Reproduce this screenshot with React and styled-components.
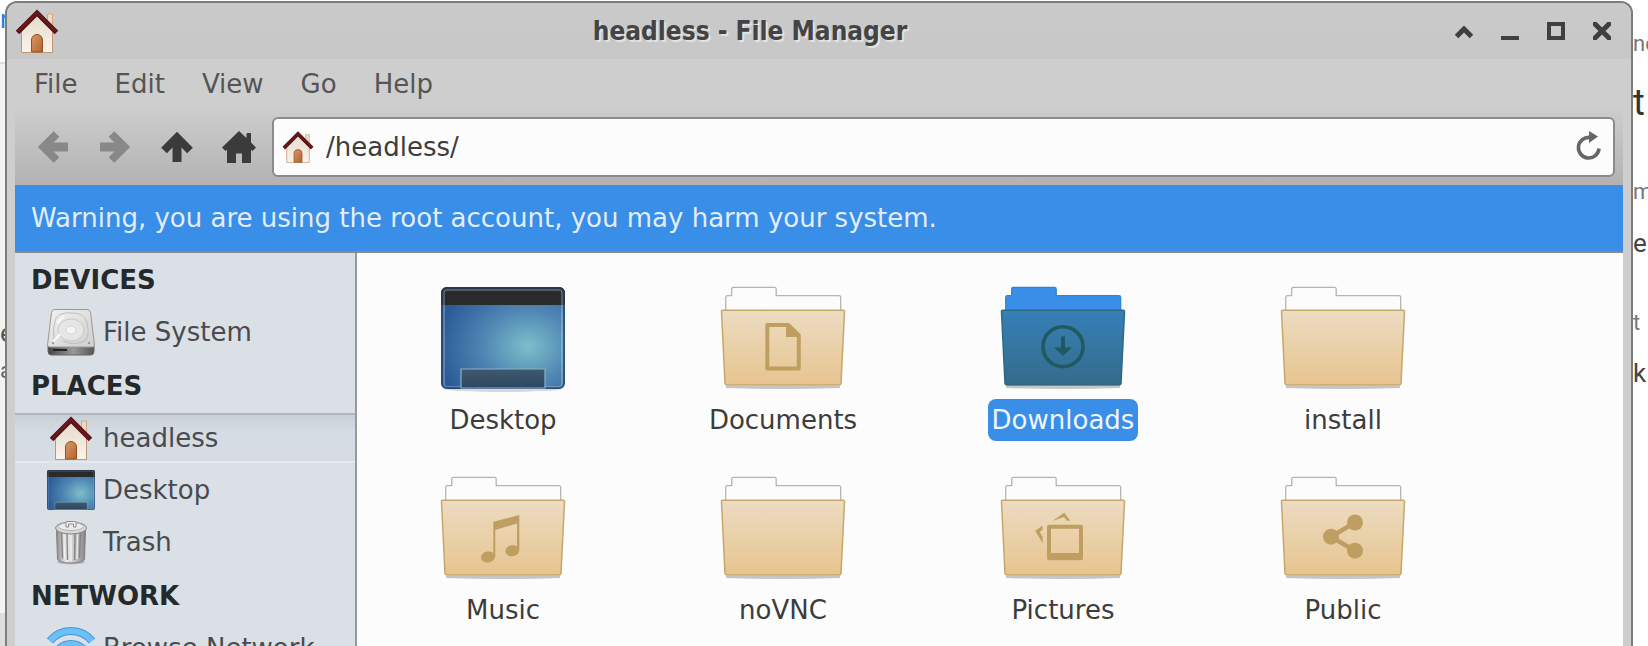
import React, { useState } from "react";
import styled, { createGlobalStyle, css } from "styled-components";

const GlobalStyle = createGlobalStyle`
  *, *::before, *::after { box-sizing: border-box; }
  body {
    margin: 0;
    background: #fefefe;
    color: #3c3c3c;
    font: 26px/32px "DejaVu Sans", Verdana, sans-serif;
  }
  button, input { font: inherit; color: inherit; }
  svg { display: block; flex: none; }
`;

/* ---------- layout ---------- */

const Screen = styled.div`
  display: grid;
  grid-template-columns: 5px minmax(0, 1fr) 15px;
  height: 100vh;
  overflow: hidden;
`;

const Gutter = styled.aside`
  display: flex;
  flex-direction: column;
  align-items: flex-start;
  overflow: hidden;
  font-family: Roboto, "Liberation Sans", sans-serif;
  background: ${(p) =>
    p.$side === "left"
      ? "linear-gradient(#fefefe 62px, #dcdcdc 62px, #dcdcdc 64px, #f3f3f3 64px, #f3f3f3 613px, #dddddd 613px)"
      : "#fefefe"};
`;

const Fragment = styled.span`
  margin-top: ${(p) => p.$gap}px;
  font-size: ${(p) => p.$size}px;
  line-height: 30px;
  color: ${(p) => p.$color || "#777"};
`;

const Window = styled.div`
  display: flex;
  flex-direction: column;
  min-width: 0;
  min-height: 0;
  margin-top: 1px;
  border: 2px solid #7c7e7b;
  border-bottom: 0;
  border-radius: 12px 12px 0 0;
  background: #cecece;
  overflow: hidden;
`;

const TitleBar = styled.header`
  display: flex;
  align-items: center;
  flex: none;
  height: 56px;
  padding: 0 6px 0 8px;
  background: linear-gradient(#cacaca, #c7c7c7);
`;

const Title = styled.h1`
  flex: 1;
  margin: 0;
  text-align: center;
  font: bold 26px/32px "DejaVu Sans Condensed", "Open Sans", sans-serif;
  color: #444;
  text-shadow: 2px 2px 0 #e2e2e2;
`;

const WindowButton = styled.button`
  display: grid;
  place-items: center;
  width: 46px;
  height: 56px;
  padding: 0;
  border: 0;
  background: none;
  color: #3f3f3f;
`;

const Body = styled.div`
  display: flex;
  flex-direction: column;
  flex: 1;
  min-height: 0;
  margin: 0 8px;
`;

const MenuBar = styled.nav`
  display: flex;
  gap: 1px;
  flex: none;
  height: 50px;
  padding: 0 1px;
`;

const MenuButton = styled.button`
  padding: 0 18px;
  border: 0;
  background: none;
  color: #555;
`;

const ToolBar = styled.div`
  display: flex;
  align-items: center;
  flex: none;
  height: 76px;
  padding: 0 8px 0 7px;
  background: linear-gradient(#cdcdcd, #b2b2b2);
`;

const ToolButton = styled.button`
  display: grid;
  place-items: center;
  width: 62px;
  height: 60px;
  padding: 0;
  border: 0;
  background: none;
  color: ${(p) => (p.disabled ? "#888" : "#3b3b3b")};
`;

const PathField = styled.label`
  display: flex;
  align-items: center;
  gap: 12px;
  flex: 1;
  min-width: 0;
  height: 60px;
  margin-left: 2px;
  padding: 0 10px 0 8px;
  border: 2px solid #8b8b8b;
  border-radius: 6px;
  background: #fcfcfc;
`;

const PathInput = styled.input`
  flex: 1;
  min-width: 0;
  padding: 0;
  border: 0;
  outline: 0;
  background: none;
`;

const ReloadButton = styled.button`
  padding: 0;
  border: 0;
  background: none;
  color: #666;
`;

const Warning = styled.p`
  flex: none;
  margin: 0;
  padding: 17px 16px;
  border-bottom: 2px solid #8a8a8a;
  background: #398ee7;
  color: #e2edf9;
`;

const Panes = styled.div`
  display: flex;
  flex: 1;
  min-height: 0;
`;

const Sidebar = styled.nav`
  flex: none;
  width: 342px;
  border-right: 2px solid #999;
  background: #dbdfe6;
  overflow: hidden;
`;

const GroupTitle = styled.h2`
  margin: 0;
  padding: 11px 16px;
  font-size: 26px;
  line-height: 32px;
  color: #24292b;
`;

const Place = styled.button`
  display: flex;
  align-items: center;
  gap: 8px;
  width: 100%;
  height: 50px;
  margin: 0 0 2px;
  padding: 0 32px;
  border: 0;
  background: none;
  color: #484b4e;
  white-space: nowrap;
  ${(p) =>
    p.$selected &&
    css`
      background: linear-gradient(#c8ced5, #d6dce3 40%, #d6dce3);
      box-shadow: inset 0 2px #b2b6bb, inset 0 -2px #e6e7e9;
    `}
`;

const PlaceIcon = styled.span`
  display: grid;
  place-items: center;
  width: 48px;
  height: 48px;
`;

const Files = styled.main`
  display: grid;
  flex: 1;
  min-width: 0;
  grid-template-columns: repeat(auto-fill, 280px);
  align-content: start;
  row-gap: 34px;
  padding: 32px 0 0 6px;
  background: #fcfcfc;
  overflow: hidden;
`;

const File = styled.button`
  display: flex;
  flex-direction: column;
  align-items: center;
  padding: 0;
  border: 0;
  background: none;
`;

const FileName = styled.span`
  padding: 5px 4px;
  border-radius: 8px;
  ${(p) => p.$selected && "background: #398ee7; color: #f0f6fd;"}
`;

/* ---------- drawings ---------- */

const House = ({ size = 44 }) => (
  <svg width={size} height={size} viewBox="0 0 44 44">
    <defs>
      <linearGradient id="wall" x2="0" y2="1">
        <stop offset="0" stopColor="#e3dacb" />
        <stop offset="1" stopColor="#fbf4ea" />
      </linearGradient>
      <linearGradient id="door" x2="1" y2="1">
        <stop offset="0" stopColor="#d99a6c" />
        <stop offset="1" stopColor="#b3622c" />
      </linearGradient>
    </defs>
    <path d="M32.5 5h5v12h-5z" fill="#eedac5" stroke="#cfa986" />
    <path d="M6.500 20 22 5l15.500 15v23.500h-31z" fill="url(#wall)" stroke="#c39472" />
    <path d="M16.500 43V31a5.500 5.500 0 0 1 11 0v12z" fill="url(#door)" stroke="#96501f" />
    <path d="M2.500 23.500 22 4l19.500 19.500" fill="none" stroke="#5a1216" strokeWidth="5" strokeLinejoin="miter" />
    <path d="M3 22.500 22 3.500l19 19" fill="none" stroke="#7a282a" strokeWidth="1" />
  </svg>
);

const DesktopArt = () => (
  <>
    <defs>
      <radialGradient id="sky" cx=".7" cy=".58" r=".72">
        <stop offset="0" stopColor="#7cbfca" />
        <stop offset=".5" stopColor="#4f86b3" />
        <stop offset="1" stopColor="#2c5c98" />
      </radialGradient>
      <linearGradient id="dock" x2="0" y2="1">
        <stop offset="0" stopColor="#41596f" />
        <stop offset="1" stopColor="#2c475f" />
      </linearGradient>
    </defs>
    <rect width="124" height="102" rx="6" fill="url(#sky)" />
    <path d="M0 18V6a6 6 0 0 1 6-6h112a6 6 0 0 1 6 6v12z" fill="#2a2a2a" />
    <rect x="3" y="3" width="118" height="97" rx="3" fill="none" stroke="#fff" strokeOpacity=".3" strokeWidth="1.500" />
    <rect x="1" y="1" width="122" height="100" rx="5" fill="none" stroke="#24406b" strokeOpacity=".7" strokeWidth="2" />
    <path d="M20 101V82h84v19z" fill="url(#dock)" stroke="#8fb0c6" strokeWidth="1.200" />
  </>
);

const DesktopSmall = () => (
  <svg width="48" height="40" viewBox="0 0 124 102" preserveAspectRatio="none"><DesktopArt /></svg>
);

const DesktopLarge = () => (
  <svg width="128" height="114" viewBox="-2 -2 128 114">
    <ellipse cx="62" cy="102" rx="58" ry="3" fill="#000" opacity=".14" />
    <DesktopArt />
  </svg>
);

const emblems = {
  document: (
    <>
      <path d="M48.300 40h21l10.500 10.500v33H48.300z" fill="none" stroke="currentColor" strokeWidth="4" strokeLinejoin="round" />
      <path d="M67 39v13h13z" fill="currentColor" />
    </>
  ),
  download: (
    <>
      <circle cx="64" cy="61.700" r="20" fill="none" stroke="currentColor" strokeWidth="3.600" />
      <path d="M62 51.500h4v11h7L64 71l-9-8.500h7z" fill="currentColor" />
    </>
  ),
  music: (
    <>
      <path d="M54.300 46.700 80.300 40v35.500H78V48.500L56.300 55v27h-2z" fill="currentColor" />
      <ellipse cx="49" cy="82" rx="7" ry="5.500" transform="rotate(-10 49 82)" fill="currentColor" />
      <ellipse cx="73.300" cy="75.700" rx="7" ry="5.500" transform="rotate(-10 73.300 75.700)" fill="currentColor" />
    </>
  ),
  pictures: (
    <>
      <path d="M50 49.700h32q2 0 2 2v31.600q0 2-2 2H50q-2 0-2-2V51.700q0-2 2-2zM52 53.700V78h28V53.700z" fillRule="evenodd" fill="currentColor" />
      <path d="M53.300 46 65.300 37.700l6 8h-3.300l-3-3.700z" fill="currentColor" />
      <path d="M43.500 50.500 36.300 56l7.400 12.300V62l-3-5.300 2.800-2z" fill="currentColor" />
    </>
  ),
  share: (
    <>
      <path d="M76 47.500 52 61.700l24 14" fill="none" stroke="currentColor" strokeWidth="4.500" />
      <circle cx="76" cy="47.500" r="8" fill="currentColor" />
      <circle cx="52" cy="61.700" r="8" fill="currentColor" />
      <circle cx="76" cy="75.700" r="8" fill="currentColor" />
    </>
  ),
};

const Folder = ({ emblem, selected }) => {
  const fill = selected ? "folder-selected" : "folder";
  return (
    <svg width="128" height="114" viewBox="0 0 128 114" color={selected ? "#1f5a62" : "#bf9f61"}>
      <defs>
        <linearGradient id={fill} x2="0" y2="1">
          <stop offset="0" stopColor={selected ? "#377fb8" : "#ecdcc2"} />
          <stop offset="1" stopColor={selected ? "#336c8a" : "#e7c48f"} />
        </linearGradient>
      </defs>
      <path d="M7 101h114v2q-57 2-114 0z" fill="#444" opacity=".3" />
      <path
        d="M6.700 30V12.500q0-1.800 1.800-1.800h4.200V4q0-1.700 1.700-1.700h41q1.800 0 1.800 1.700v6.700h62.700q1.800 0 1.800 1.800V30z"
        fill={selected ? "#398ee7" : "#fcfcfc"}
        stroke={selected ? "#3283d8" : "#b4b4b8"}
        strokeWidth="1.300"
      />
      <path
        d="M3.800 25.300h120.400q1.400 0 1.300 1.400L122 98.500q-.2 1.500-1.700 1.500H7.700Q6.200 100 6 98.500L2.500 26.700q-.1-1.400 1.300-1.400z"
        fill={`url(#${fill})`}
        stroke={selected ? "#2d6a80" : "#c5a869"}
        strokeWidth="1.500"
      />
      {emblems[emblem]}
    </svg>
  );
};

const Disk = () => (
  <svg width="48" height="48" viewBox="0 0 48 48">
    <defs>
      <linearGradient id="disk-top" x2="1" y2="1">
        <stop offset="0" stopColor="#f2f2f2" />
        <stop offset=".6" stopColor="#dcdcdc" />
        <stop offset="1" stopColor="#cfcfcf" />
      </linearGradient>
      <linearGradient id="disk-edge">
        <stop offset="0" stopColor="#444" />
        <stop offset=".55" stopColor="#999" />
        <stop offset="1" stopColor="#555" />
      </linearGradient>
    </defs>
    <path d="M1 38h46v5q0 4-3 4H4q-3 0-3-4z" fill="url(#disk-edge)" stroke="#666" />
    <path d="M8 1.500h32q3 0 3.500 3L47.500 37q0 2-2 2h-43q-2 0-2-2L4.500 4.500q.5-3 3.500-3z" fill="url(#disk-top)" stroke="#999" />
    <path d="M7 31Q5 20 9 10 13 4 25 5q13 0 15 10 3 12-2 18-12 5-22 0" fill="none" stroke="#bdbdbd" />
    <ellipse cx="24" cy="22" rx="13" ry="11" fill="#e6e6e6" stroke="#c9c9c9" />
    <ellipse cx="24" cy="22" rx="5" ry="4" fill="#f5f5f5" stroke="#d4d4d4" />
    <path d="M6 34 13 26M10 15l7-7" stroke="#fafafa" strokeWidth="2" />
    <circle cx="6" cy="35" r="1" fill="#888" />
    <circle cx="42" cy="35" r="1" fill="#888" />
    <path d="M6 42h14" stroke="#222" strokeWidth="2" />
  </svg>
);

const Trash = () => (
  <svg width="48" height="48" viewBox="0 0 48 48">
    <defs>
      <linearGradient id="can">
        <stop offset="0" stopColor="#8b8b8b" />
        <stop offset=".35" stopColor="#ececec" />
        <stop offset=".7" stopColor="#b8b8b8" />
        <stop offset="1" stopColor="#858585" />
      </linearGradient>
    </defs>
    <ellipse cx="24" cy="44" rx="14" ry="2.500" fill="#000" opacity=".15" />
    <path d="M9.500 11h29L37.500 41q-1 4-13.500 4t-13.500-4z" fill="url(#can)" stroke="#7d7d7d" />
    <path d="M14.500 15l1 25M20 16l.5 26M28 16l-.5 26M33.500 15l-1 25" stroke="#858585" strokeWidth="1.400" />
    <path d="M17 16l.5 25M24 16v27M30.500 16l-.5 25" stroke="#f3f3f3" strokeWidth="1.200" />
    <ellipse cx="24" cy="10" rx="15.500" ry="6" fill="#d8d8d8" stroke="#858585" />
    <ellipse cx="24" cy="8.500" rx="12.500" ry="4" fill="#ebebeb" stroke="#b5b5b5" />
    <path d="M19 9V4.500q0-1 1-1h8q1 0 1 1V9h-2.500V6h-5v3z" fill="#f2f2f2" stroke="#8a8a8a" />
  </svg>
);

const Wireless = () => (
  <svg width="48" height="48" viewBox="0 0 48 48" fill="none">
    <path d="M3 17a27 27 0 0 1 42 0" stroke="#3f95d8" strokeWidth="8" />
    <path d="M3 17a27 27 0 0 1 42 0" stroke="#6cc0f5" strokeWidth="6" />
    <path d="M11 26a17 17 0 0 1 26 0" stroke="#3f95d8" strokeWidth="8" />
    <path d="M11 26a17 17 0 0 1 26 0" stroke="#6cc0f5" strokeWidth="6" />
    <circle cx="24" cy="37" r="6" fill="#4ba3e3" />
  </svg>
);

const Arrow = ({ turn = 0 }) => (
  <svg width="32" height="32" viewBox="0 0 32 32">
    <g transform={`rotate(${turn} 16 16)`} fill="none" stroke="currentColor">
      <path d="M16 31V6" strokeWidth="9" />
      <path d="M3 19.500 16 6.500l13 13" strokeWidth="8" />
    </g>
  </svg>
);

const HomeGlyph = () => (
  <svg width="34" height="32" viewBox="0 0 34 32" fill="currentColor">
    <path d="M17 0 24.500 7V3q0-1 1-1H29v9.500l5 5-3.500 3.500-1.500-1.200V32h-9v-9.500h-6V32H5V18.800L3.500 20 0 16.500z" />
  </svg>
);

const Reload = () => (
  <svg width="28" height="32" viewBox="0 0 28 32">
    <path d="M24 17.500A10.300 10.300 0 1 1 15 6.500" fill="none" stroke="currentColor" strokeWidth="3.600" />
    <path d="M14 0 23 5.500 14 12z" fill="currentColor" />
  </svg>
);

const windowActions = [
  ["Shade", <path d="M1.500 14.500 9 7l7.500 7.500" fill="none" stroke="currentColor" strokeWidth="5" />],
  ["Minimize", <path d="M0 14h18v4H0z" fill="currentColor" />],
  ["Maximize", <path d="M2 2h14v14H2z" fill="none" stroke="currentColor" strokeWidth="4" />],
  ["Close", <path d="M2 2l14 14M16 2 2 16" stroke="currentColor" strokeWidth="5" strokeLinecap="round" />],
];

/* ---------- content ---------- */

const menus = ["File", "Edit", "View", "Go", "Help"];

const groups = [
  { name: "DEVICES", places: [["File System", <Disk />]] },
  {
    name: "PLACES",
    places: [["headless", <House />], ["Desktop", <DesktopSmall />], ["Trash", <Trash />]],
  },
  { name: "NETWORK", places: [["Browse Network", <Wireless />]] },
];

const files = [
  ["Desktop", "desktop"],
  ["Documents", "document"],
  ["Downloads", "download"],
  ["install"],
  ["Music", "music"],
  ["noVNC"],
  ["Pictures", "pictures"],
  ["Public", "share"],
];

export default function App() {
  const [selected, setSelected] = useState("Downloads");
  const [path, setPath] = useState("/headless/");

  return (
    <Screen>
      <GlobalStyle />
      <Gutter $side="left" aria-hidden="true">
        <Fragment $gap={4} $size={26} $color="#2f7af0">r</Fragment>
        <Fragment $gap={284} $size={26} $color="#555">e</Fragment>
        <Fragment $gap={8} $size={22} $color="#666">a</Fragment>
      </Gutter>
      <Window>
        <TitleBar>
          <House />
          <Title>headless - File Manager</Title>
          {windowActions.map(([label, shape]) => (
            <WindowButton key={label} aria-label={label}>
              <svg width="18" height="18" viewBox="0 0 18 18">{shape}</svg>
            </WindowButton>
          ))}
        </TitleBar>
        <Body>
          <MenuBar>
            {menus.map((name) => <MenuButton key={name}>{name}</MenuButton>)}
          </MenuBar>
          <ToolBar>
            <ToolButton disabled aria-label="Back"><Arrow turn={-90} /></ToolButton>
            <ToolButton disabled aria-label="Forward"><Arrow turn={90} /></ToolButton>
            <ToolButton aria-label="Up"><Arrow /></ToolButton>
            <ToolButton aria-label="Home"><HomeGlyph /></ToolButton>
            <PathField>
              <House size={32} />
              <PathInput aria-label="Location" value={path} onChange={(e) => setPath(e.target.value)} />
              <ReloadButton aria-label="Reload"><Reload /></ReloadButton>
            </PathField>
          </ToolBar>
          <Warning>Warning, you are using the root account, you may harm your system.</Warning>
          <Panes>
            <Sidebar>
              {groups.map((group) => (
                <section key={group.name}>
                  <GroupTitle>{group.name}</GroupTitle>
                  {group.places.map(([name, icon]) => (
                    <Place key={name} $selected={name === "headless"}>
                      <PlaceIcon>{icon}</PlaceIcon>
                      {name}
                    </Place>
                  ))}
                </section>
              ))}
            </Sidebar>
            <Files>
              {files.map(([name, kind]) => (
                <File key={name} onClick={() => setSelected(name)}>
                  {kind === "desktop" ? <DesktopLarge /> : <Folder emblem={kind} selected={name === selected} />}
                  <FileName $selected={name === selected}>{name}</FileName>
                </File>
              ))}
            </Files>
          </Panes>
        </Body>
      </Window>
      <Gutter $side="right" aria-hidden="true">
        <Fragment $gap={29} $size={22}>ne</Fragment>
        <Fragment $gap={29} $size={36} $color="#333">t</Fragment>
        <Fragment $gap={59} $size={22}>m</Fragment>
        <Fragment $gap={21} $size={26} $color="#444">er</Fragment>
        <Fragment $gap={50} $size={22}>t</Fragment>
        <Fragment $gap={20} $size={26} $color="#444">k</Fragment>
      </Gutter>
    </Screen>
  );
}
